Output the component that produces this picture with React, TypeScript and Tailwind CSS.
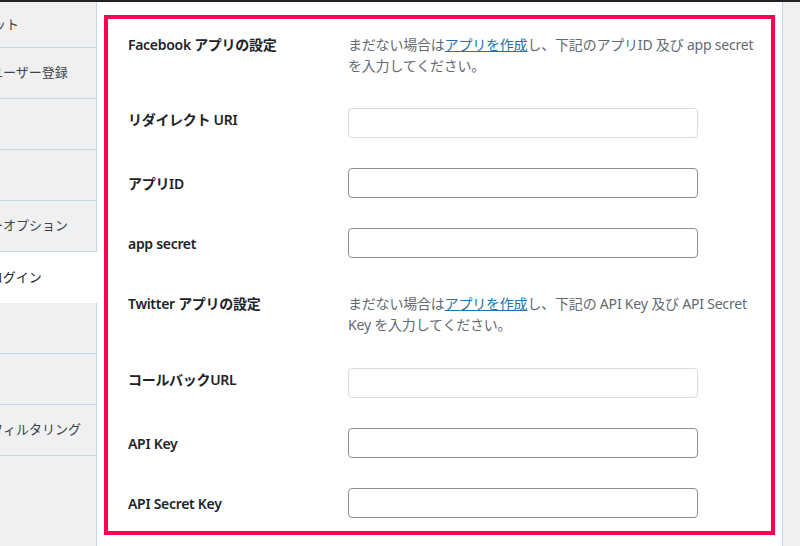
const tabs = [
  { label: 'ウィジェット', shift: '-ml-[59px]', first: true },
  { label: 'ユーザー登録', shift: '-ml-[10px]' },
  { label: '' },
  { label: '' },
  { label: 'メニューオプション', shift: '-ml-[49px]' },
  { label: 'ソーシャルログイン', shift: '-ml-[75px]', active: true },
  { label: '' },
  { label: '' },
  { label: 'スパムフィルタリング', shift: '-ml-[48px]' },
]

function Field({ readOnly }: { readOnly?: boolean }) {
  return (
    <input
      type="text"
      readOnly={readOnly}
      className={`block h-[30px] w-[350px] rounded-[4px] border bg-white px-2 text-sm outline-none ${
        readOnly ? 'border-[#dcdcde]' : 'border-[#8c8f94]'
      }`}
    />
  )
}

function Note({ middle, last }: { middle: string; last: string }) {
  return (
    <p className="whitespace-nowrap text-[14px] leading-[21px] tracking-[-0.2px] text-[#646970]">
      まだない場合は
      <a href="#" className="text-[#2271b1] underline">
        アプリを作成
      </a>
      し、{middle}
      <br />
      {last}
    </p>
  )
}

function Row({
  label,
  labelPad,
  rowClass,
  children,
}: {
  label: string
  labelPad: string
  rowClass: string
  children: React.ReactNode
}) {
  return (
    <div className={`flex ${rowClass}`}>
      <div
        className={`w-[220px] shrink-0 text-[14px] font-semibold leading-[21px] tracking-[-0.3px] text-[#1d2327] ${labelPad}`}
      >
        {label}
      </div>
      <div>{children}</div>
    </div>
  )
}

export default function App() {
  return (
    <div
      className="flex h-[546px] w-[800px] flex-col overflow-hidden bg-white"
      style={{ fontFamily: '"Noto Sans", "Noto Sans CJK JP", sans-serif' }}
    >
      <div className="h-[2px] bg-[#1d2327]" />

      <div className="flex flex-1">
        {/* settings tabs, scrolled to the left */}
        <div className="flex w-[97px] shrink-0 flex-col overflow-hidden">
          {tabs.map((tab, i) => (
            <div
              key={i}
              className={`flex shrink-0 items-center whitespace-nowrap text-[13px] ${
                tab.first ? 'h-[46px]' : 'h-[51px]'
              } ${
                tab.active
                  ? 'bg-white text-[#1d2327]'
                  : 'border-b border-r border-[#c8d5e3] bg-[#f0f0f1] text-[#3c434a]'
              }`}
            >
              <span className={tab.shift}>{tab.label}</span>
            </div>
          ))}
          <div className="flex-1 border-r border-[#c8d5e3] bg-[#f0f0f1]" />
        </div>

        <div className="w-[685px] shrink-0 pl-[7px] pt-[13px]">
          <div className="h-[520px] w-[671px] border-[4px] border-[#fc0252] bg-white pl-[20px]">
            <Row label="Facebook アプリの設定" labelPad="" rowClass="h-[74px] pt-[15px]">
              <Note middle="下記のアプリID 及び app secret" last="を入力してください。" />
            </Row>
            <Row label="リダイレクト URI" labelPad="pt-[1px]" rowClass="h-[60px] pt-[15px]">
              <Field readOnly />
            </Row>
            <Row label="アプリID" labelPad="pt-[5px]" rowClass="h-[60px] pt-[15px]">
              <Field />
            </Row>
            <Row label="app secret" labelPad="pt-[5px]" rowClass="h-[60px] pt-[15px]">
              <Field />
            </Row>
            <Row label="Twitter アプリの設定" labelPad="" rowClass="h-[80px] pt-[20px]">
              <Note middle="下記の API Key 及び API Secret" last="Key を入力してください。" />
            </Row>
            <Row label="コールバックURL" labelPad="pt-[1px]" rowClass="h-[60px] pt-[15px]">
              <Field readOnly />
            </Row>
            <Row label="API Key" labelPad="pt-[5px]" rowClass="h-[60px] pt-[15px]">
              <Field />
            </Row>
            <Row label="API Secret Key" labelPad="pt-[5px]" rowClass="h-[60px] pt-[15px]">
              <Field />
            </Row>
          </div>
        </div>

        <div className="flex-1 border-l border-[#c8d5e3] bg-[#f0f0f1]" />
      </div>
    </div>
  )
}
